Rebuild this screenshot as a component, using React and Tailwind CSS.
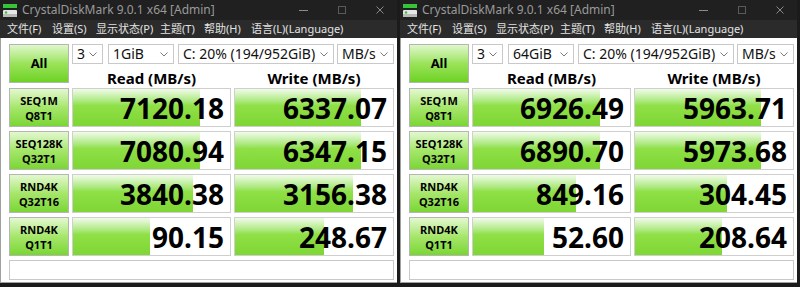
const windows = [
  {
    size: '1GiB',
    rows: [
      ['SEQ1M', 'Q8T1', '7120.18', '6337.07'],
      ['SEQ128K', 'Q32T1', '7080.94', '6347.15'],
      ['RND4K', 'Q32T16', '3840.38', '3156.38'],
      ['RND4K', 'Q1T1', '90.15', '248.67'],
    ],
  },
  {
    size: '64GiB',
    rows: [
      ['SEQ1M', 'Q8T1', '6926.49', '5963.71'],
      ['SEQ128K', 'Q32T1', '6890.70', '5973.68'],
      ['RND4K', 'Q32T16', '849.16', '304.45'],
      ['RND4K', 'Q1T1', '52.60', '208.64'],
    ],
  },
]

const menu = [
  ['文件(F)', 'w-[45px]'],
  ['设置(S)', 'w-[44px]'],
  ['显示状态(P)', 'w-[64px]'],
  ['主题(T)', 'w-[44px]'],
  ['帮助(H)', 'w-[47px]'],
  ['语言(L)(Language)', ''],
]

// CrystalDiskMark meter is log scale: log10(v * 10) / 6
const meter = (v) => Math.min(1, Math.log10(parseFloat(v) * 10) / 6)

function DiskIcon() {
  return (
    <svg width="14" height="13" viewBox="0 0 14 13">
      <rect x="0" y="0" width="14" height="4" fill="#35c43a" />
      <rect x="0" y="6" width="14" height="7" rx="1" fill="#e6e6e6" />
      <rect x="0" y="10" width="14" height="3" fill="#b8b8b8" />
      <circle cx="3" cy="8.5" r="1.3" fill="#35c43a" />
    </svg>
  )
}

function Chevron() {
  return (
    <svg width="8" height="5" viewBox="0 0 8 5" className="shrink-0">
      <polyline points="0.5,0.5 4,4 7.5,0.5" fill="none" stroke="#7a7a7a" strokeWidth="1" />
    </svg>
  )
}

function Combo({ value, w }) {
  return (
    <div className={`${w} h-[20px] border border-[#c9c9c9] bg-white flex items-center justify-between pl-[4px] pr-[5px] text-[14px] text-[#111] leading-none`}>
      <span>{value}</span>
      <Chevron />
    </div>
  )
}

function Meter({ value }) {
  return (
    <div className="relative h-full border border-[#cfcfcf] bg-white overflow-hidden">
      <div
        className="absolute left-0 top-0 bottom-0 bg-linear-to-b from-[#f2fbe9] from-0% via-[#8fe046] via-45% to-[#7fd634]"
        style={{ width: `${meter(value) * 100}%` }}
      />
      <div className="relative h-full flex items-center justify-end pr-[6px] text-[28px] font-bold text-black leading-none">
        {value}
      </div>
    </div>
  )
}

function Window({ size, rows }) {
  return (
    <div className="w-[397px] h-[283px] flex flex-col bg-white">
      <div className="h-[20px] shrink-0 bg-[#202020] flex items-center pl-[3px] text-[12px] text-[#9a9a9a]">
        <DiskIcon />
        <span className="ml-[5px]">CrystalDiskMark 9.0.1 x64 [Admin]</span>
        <div className="ml-auto flex items-center gap-[30px] pr-[13px]">
          <svg width="9" height="9" viewBox="0 0 9 9">
            <line x1="0" y1="4.5" x2="9" y2="4.5" stroke="#8a8a8a" />
          </svg>
          <svg width="8" height="8" viewBox="0 0 8 8">
            <rect x="0.5" y="0.5" width="7" height="7" fill="none" stroke="#5a5a5a" />
          </svg>
          <svg width="8" height="8" viewBox="0 0 8 8">
            <path d="M0.5 0.5 L7.5 7.5 M7.5 0.5 L0.5 7.5" stroke="#8a8a8a" />
          </svg>
        </div>
      </div>
      <div className="h-[18px] shrink-0 bg-[#2b2b2b] flex items-center pl-[7px] text-[11px] text-[#e2e2e2] whitespace-nowrap">
        {menu.map(([m, w]) => (
          <span key={m} className={w}>{m}</span>
        ))}
      </div>
      <div className="flex-1 flex flex-col pl-[8px] pt-[6px] border-l border-b border-[#a0a0a0]">
        <div className="flex items-start gap-[3px]">
          <div className="w-[60px] h-[39px] border border-[#b5b5b5] bg-linear-to-b from-[#dff7c9] via-[#9be359] to-[#6cd21f] flex items-center justify-center text-[13px] font-bold text-black">
            All
          </div>
          <div className="flex flex-col">
            <div className="flex items-center">
              <Combo value="3" w="w-[31px]" />
              <div className="w-[5px]" />
              <Combo value={size} w="w-[66px]" />
              <div className="w-[4px]" />
              <Combo value="C: 20% (194/952GiB)" w="w-[156px]" />
              <div className="w-[3px]" />
              <Combo value="MB/s" w="w-[57px]" />
            </div>
            <div className="h-[24px] flex gap-[3px] pt-[4px] text-[15px] font-bold text-black leading-[20px]">
              <div className="w-[159px] text-center">Read (MB/s)</div>
              <div className="w-[160px] text-center">Write (MB/s)</div>
            </div>
          </div>
        </div>
        <div className="flex flex-col gap-[4px]">
          {rows.map(([a, b, r, w], i) => (
            <div key={i} className="h-[39px] grid grid-cols-[60px_159px_160px] gap-[3px]">
              <div className="border border-[#b5b5b5] bg-linear-to-b from-[#e3f8cf] via-[#a6e66a] to-[#7ad632] flex flex-col items-center justify-center text-[11px] font-bold text-black leading-[15px]">
                <span>{a}</span>
                <span>{b}</span>
              </div>
              <Meter value={r} />
              <Meter value={w} />
            </div>
          ))}
        </div>
        <div className="mt-[4px] w-[385px] h-[20px] border border-[#c9c9c9] bg-white" />
      </div>
    </div>
  )
}

export default function App() {
  return (
    <div className="w-[800px] h-[287px] bg-[#1b1b1b] flex gap-[3px] font-['Noto_Sans','Noto_Sans_CJK_SC',sans-serif]">
      {windows.map((w) => (
        <Window key={w.size} {...w} />
      ))}
    </div>
  )
}
